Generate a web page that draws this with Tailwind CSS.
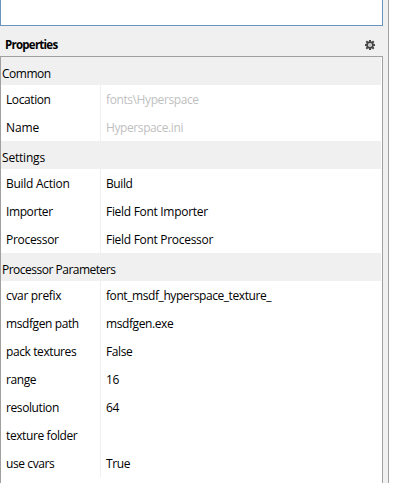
<!DOCTYPE html>
<html lang="en">
<head>
<meta charset="utf-8">
<title>Properties</title>
<script src="https://cdn.jsdelivr.net/npm/@tailwindcss/browser@4"></script>
</head>
<body class="h-screen overflow-hidden bg-white font-['Open_Sans','Noto_Sans',sans-serif] text-[12px] leading-4 tracking-[-0.4px] text-black">
<div class="flex h-[483px] w-[389px] flex-col border-r border-[#a0a0a0] bg-[#f0f0f0] pr-[5px]">
  <div class="h-[26px] w-[383px] shrink-0 border border-t-0 border-[#6a93bd] bg-white"></div>
  <header class="flex h-[30px] shrink-0 items-center justify-between pt-[7px] pr-[7px] pl-[5px]">
    <h1 class="text-[11.5px] font-bold tracking-[-0.75px]">Properties</h1>
    <svg class="size-[12px]" viewBox="0 0 12 12" fill="none" stroke="#444"><circle cx="6" cy="6" r="2.900" stroke-width="1.700"/><circle cx="6" cy="6" r="1.200" stroke="#aaa" stroke-width=".8"/><path d="M6 1v1.700M6 9.300V11M1 6h1.700M9.300 6H11M2.300 2.300l1.300 1.300M8.400 8.400l1.300 1.300M9.700 2.300l-1.300 1.300M3.600 8.400l-1.300 1.300" stroke-width="2"/></svg>
  </header>
  <main class="min-h-0 w-[383px] grow overflow-hidden border border-b-0 border-[#a0a0a0] bg-white pr-px">
    <h2 class="flex h-7 items-center bg-[#f0f0f0] pt-[6px] pl-px tracking-[-0.5px]"><span>Common</span></h2>
    <dl class="grid grid-cols-[100px_1fr] auto-rows-[28px] *:flex *:items-center *:pt-[2px] *:odd:border-r *:odd:border-[#f0f0f0] *:odd:pl-[5px] *:even:pl-[5px]">
      <dt><span>Location</span></dt><dd class="text-[#bfbfbf]"><span>fonts\Hyperspace</span></dd>
      <dt class="tracking-[-0.1px]"><span>Name</span></dt><dd class="text-[#bfbfbf]"><span>Hyperspace.ini</span></dd>
    </dl>
    <h2 class="flex h-7 items-center bg-[#f0f0f0] pt-[6px] pl-px tracking-[-0.2px]"><span>Settings</span></h2>
    <dl class="grid grid-cols-[100px_1fr] auto-rows-[28px] *:flex *:items-center *:pt-[2px] *:odd:border-r *:odd:border-[#f0f0f0] *:odd:pl-[5px] *:even:pl-[5px]">
      <dt class="tracking-[-0.27px]"><span>Build Action</span></dt><dd><span>Build</span></dd>
      <dt><span>Importer</span></dt><dd class="tracking-[-0.3px]"><span>Field Font Importer</span></dd>
      <dt class="tracking-[-0.3px]"><span>Processor</span></dt><dd class="tracking-[-0.3px]"><span>Field Font Processor</span></dd>
    </dl>
    <h2 class="flex h-7 items-center bg-[#f0f0f0] pt-[6px] pl-px tracking-[-0.5px]"><span>Processor Parameters</span></h2>
    <dl class="grid grid-cols-[100px_1fr] auto-rows-[28px] *:flex *:items-center *:pt-[2px] *:odd:border-r *:odd:border-[#f0f0f0] *:odd:pl-[5px] *:even:pl-[5px]">
      <dt class="tracking-[-0.32px]"><span>cvar prefix</span></dt><dd class="tracking-[-0.42px]"><span>font_msdf_hyperspace_texture_</span></dd>
      <dt><span>msdfgen path</span></dt><dd><span>msdfgen.exe</span></dd>
      <dt><span>pack textures</span></dt><dd><span>False</span></dd>
      <dt><span>range</span></dt><dd><span>16</span></dd>
      <dt><span>resolution</span></dt><dd><span>64</span></dd>
      <dt><span>texture folder</span></dt><dd></dd>
      <dt><span>use cvars</span></dt><dd><span>True</span></dd>
    </dl>
  </main>
</div>
</body>
</html>
